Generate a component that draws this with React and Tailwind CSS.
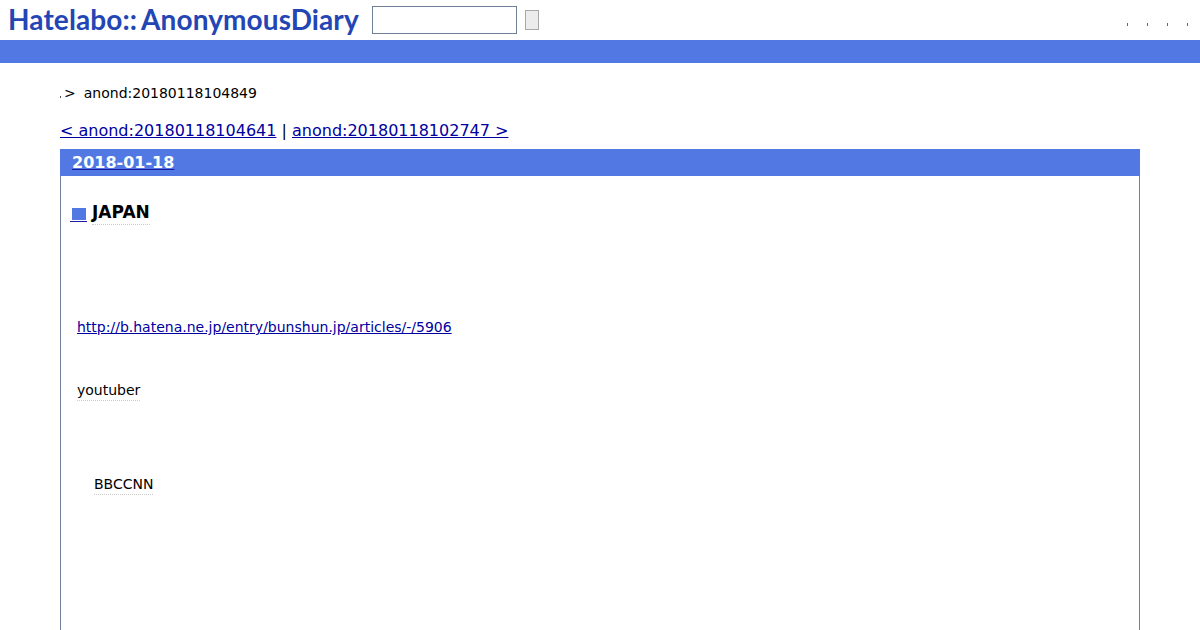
export default function App() {
  return (
    <div className="h-[630px] overflow-hidden bg-white font-['DejaVu_Sans',sans-serif] text-black">
      <header className="flex h-10 items-start justify-between">
        <div className="flex items-start">
          <a className="ml-2 mt-[1px] flex w-[352px] whitespace-nowrap font-['Lato',sans-serif] text-[28px] font-bold leading-9 tracking-[0.1px] text-[#2346b4]">
            <span>Hatelabo::</span>
            <span className="ml-[4px]">AnonymousDiary</span>
          </a>
          <input className="ml-[12px] mt-[6px] h-7 w-[145px] border border-[#6f7f95] bg-white" />
          <button className="ml-2 mt-[10px] h-5 w-[14px] border border-[#a8a8a8] bg-[#ececec]" />
        </div>
        <div className="mr-[12px] mt-[23px] flex gap-[19px]">
          <span className="h-[3px] w-px bg-[#666]" />
          <span className="h-[3px] w-px bg-[#666]" />
          <span className="h-[3px] w-px bg-[#666]" />
          <span className="h-[3px] w-px bg-[#666]" />
        </div>
      </header>
      <div className="h-[23px] bg-[#5278e3]" />
      <main className="px-[60px]">
        <div className="mt-[21px] flex h-[18px] items-center text-[14px] leading-[18px]">
          <span className="mt-[8px] h-[2px] w-px bg-[#555]" />
          <span className="ml-[3px]">&gt;</span>
          <span className="ml-[8px]">anond:20180118104849</span>
        </div>
        <nav className="mt-[19px] h-[19px] whitespace-nowrap text-[16px] leading-5">
          <a className="text-[#0000a0] underline">&lt; anond:20180118104641</a>
          <span> | </span>
          <a className="text-[#0000a0] underline">anond:20180118102747 &gt;</a>
        </nav>
        <section className="mt-[9px] h-[600px] border border-t-0 border-[#6f7f95]">
          <h2 className="-mx-px flex h-[27px] items-center bg-[#5278e3] pl-3 text-[16px] font-bold text-white">
            <a className="underline decoration-[#1a1aa6]">2018-01-18</a>
          </h2>
          <div className="ml-[9px] mt-[26px] flex h-[22px] items-center text-[17px] font-bold leading-[22px]">
            <a className="flex h-[17px] w-[17px] items-end justify-center border-b border-[#1a1aa6] pb-[1px]">
              <span className="h-[12px] w-[14px] bg-[#5278e3]" />
            </a>
            <span className="ml-[5px] border-b border-dotted border-[#ccc] pb-[1px]">JAPAN</span>
          </div>
          <div className="ml-4 mt-[92px] text-[14px] leading-[22px]">
            <a className="text-[#0000a0] underline">http://b.hatena.ne.jp/entry/bunshun.jp/articles/-/5906</a>
          </div>
          <div className="ml-4 mt-[42px] flex text-[14px] leading-[22px]">
            <span className="border-b border-dotted border-[#ccc] leading-[20px]">youtuber</span>
          </div>
          <div className="ml-[33px] mt-[73px] flex text-[14px] leading-[22px]">
            <span className="border-b border-dotted border-[#ccc] leading-[20px]">BBCCNN</span>
          </div>
        </section>
      </main>
    </div>
  );
}
